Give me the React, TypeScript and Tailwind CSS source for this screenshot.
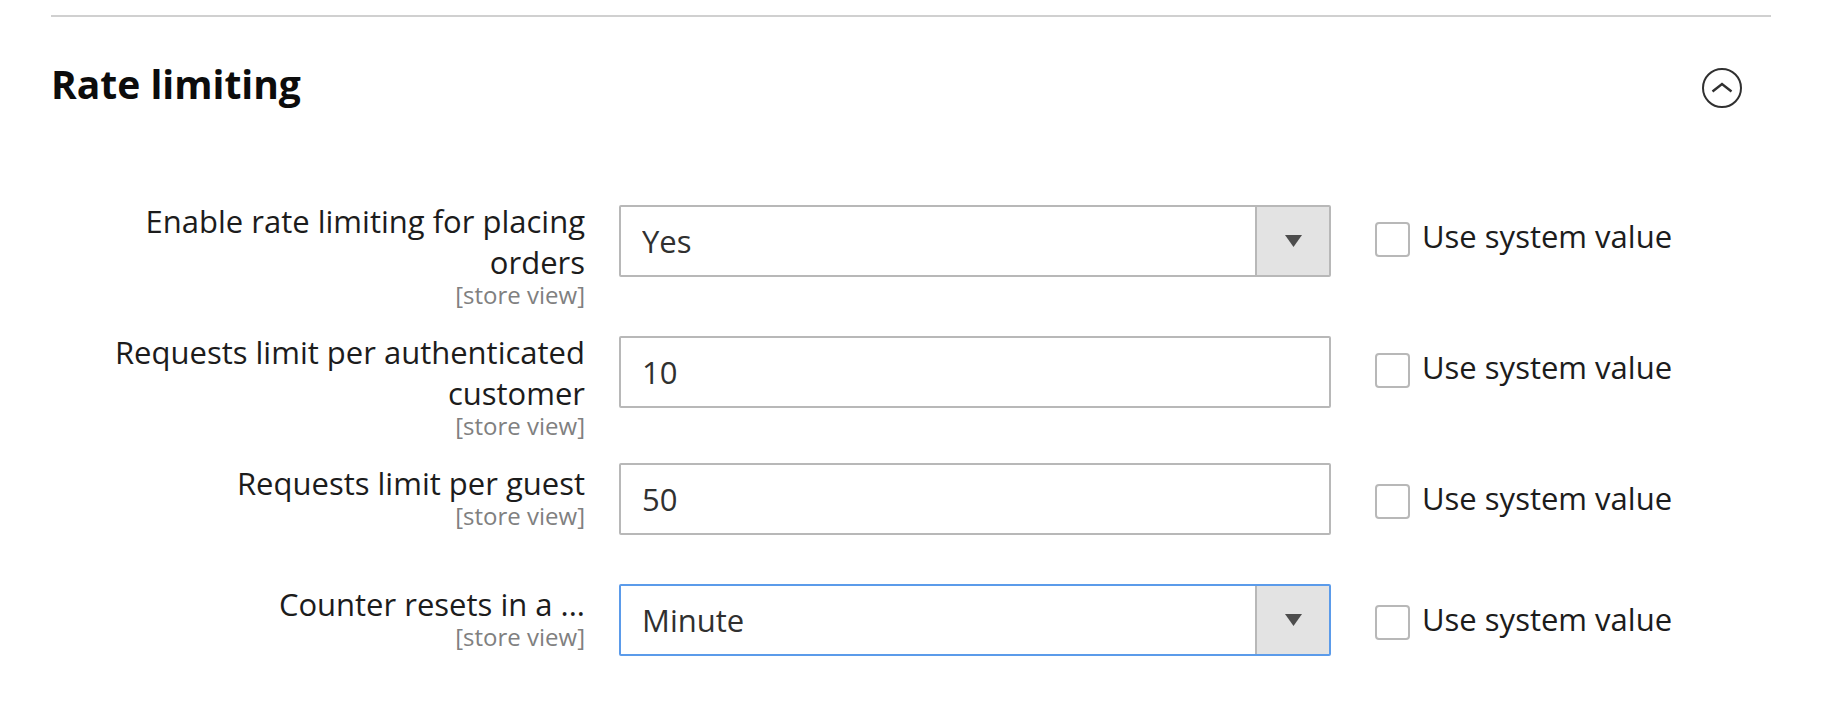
import { useId, useState } from "react";

type Field = {
  label: string;
  value: string;
  options?: string[];
  focused?: boolean;
  tall?: boolean;
};

const fields: Field[] = [
  { label: "Enable rate limiting for placing orders", value: "Yes", options: ["Yes", "No"], tall: true },
  { label: "Requests limit per authenticated customer", value: "10", tall: true },
  { label: "Requests limit per guest", value: "50" },
  { label: "Counter resets in a ...", value: "Minute", options: ["Minute", "Hour", "Day"], focused: true },
];

const SelectBox = ({ id, field }: { id: string; field: Field }) => (
  <div className="relative">
    <select
      id={id}
      defaultValue={field.value}
      className={`block h-18 w-full appearance-none rounded-[2px] border-2 bg-white pl-[21px] pr-24 text-[31px] text-[#303030] outline-none ${
        field.focused ? "border-[#5b9bea]" : "border-[#b8b8b8]"
      }`}
    >
      {field.options!.map((option) => (
        <option key={option}>{option}</option>
      ))}
    </select>
    <span className="pointer-events-none absolute inset-y-[2px] right-[2px] flex w-[74px] items-center justify-center border-l-2 border-[#b8b8b8] bg-[#e3e3e3]">
      <svg width="17" height="12" viewBox="0 0 17 12" aria-hidden="true">
        <path d="M0 0h17L8.5 12z" fill="#4d4d4d" />
      </svg>
    </span>
  </div>
);

const FieldRow = ({ field }: { field: Field }) => {
  const id = useId();
  return (
    <div className="grid min-h-24 grid-cols-[534fr_712fr_406fr] items-start gap-x-[34px]">
      <label htmlFor={id} className="block pl-14 text-right text-[31px] leading-[41px]">
        {field.label}
        <span className="block text-[24px] leading-[24px] text-[#808080]">[store view]</span>
      </label>
      <div className={field.tall ? "pt-1" : ""}>
        {field.options ? (
          <SelectBox id={id} field={field} />
        ) : (
          <input
            id={id}
            type="text"
            defaultValue={field.value}
            className="block h-18 w-full rounded-[2px] border-2 border-[#b8b8b8] bg-white px-[21px] text-[31px] text-[#303030] outline-none"
          />
        )}
      </div>
      <div className="flex items-start gap-3 pt-[15px] pl-[10px]">
        <input
          id={`${id}-inherit`}
          type="checkbox"
          className="mt-[6px] size-[35px] shrink-0 appearance-none rounded-[4px] border-2 border-[#b8b8b8] bg-white checked:bg-[#e3e3e3]"
        />
        <label htmlFor={`${id}-inherit`} className="text-[31px] leading-[41px] whitespace-nowrap">
          Use system value
        </label>
      </div>
    </div>
  );
};

const App = () => {
  const [open, setOpen] = useState(true);

  return (
    <main className="min-h-screen bg-white pt-[15px] pr-[68px] pl-[51px] font-['Open_Sans','Noto_Sans',sans-serif] text-[#1c1c1c]">
      <section className="border-t-2 border-[#d0d0d0] pt-[41px]">
        <div className="flex items-center justify-between pr-[29px]">
          <h2 className="text-[39px] leading-[52px] font-bold text-[#0c0c0c]">Rate limiting</h2>
          <button
            type="button"
            aria-label="Toggle rate limiting"
            aria-expanded={open}
            onClick={() => setOpen(!open)}
            className="mt-2 size-10"
          >
            <svg viewBox="0 0 40 40" fill="none" stroke="#303030" strokeWidth="2" className={open ? "" : "rotate-180"}>
              <circle cx="20" cy="20" r="19" />
              <path d="M10.5 23.5 20 16l9.5 7.5" strokeWidth="2.4" />
            </svg>
          </button>
        </div>
        {open && (
          <div className="flex flex-col gap-y-[25px] pt-[91px]">
            {fields.map((field) => (
              <FieldRow key={field.label} field={field} />
            ))}
          </div>
        )}
      </section>
    </main>
  );
};

export default App;
